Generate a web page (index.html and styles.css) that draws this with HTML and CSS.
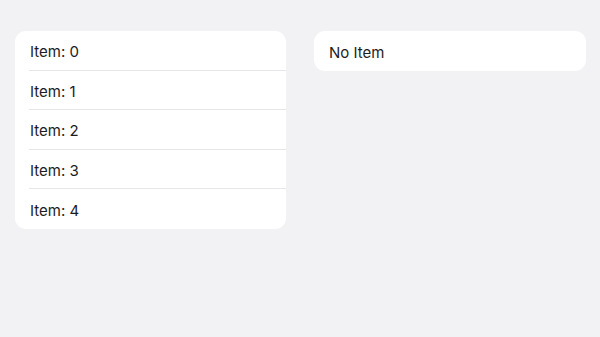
FILE: index.html
```html
<!DOCTYPE html>
<html>
<head>
<meta charset="utf-8">
<link rel="stylesheet" href="styles.css">
</head>
<body>
<div class="layout">
  <div class="card">
    <div class="row"><span>Item: 0</span></div>
    <div class="row"><span>Item: 1</span></div>
    <div class="row"><span>Item: 2</span></div>
    <div class="row"><span>Item: 3</span></div>
    <div class="row"><span>Item: 4</span></div>
  </div>
  <div class="card">
    <div class="row"><span>No Item</span></div>
  </div>
</div>
</body>
</html>
```
FILE: styles.css
```css
html, body {
  margin: 0;
  padding: 0;
  background: #f2f2f4;
  width: 600px;
  height: 337px;
  overflow: hidden;
}
body {
  font-family: Inter, "Liberation Sans", sans-serif;
  font-size: 15px;
  color: #1c1c1e;
}
.layout {
  display: grid;
  grid-template-columns: 271px 272px;
  gap: 28px;
  padding: 31px 14px 0 15px;
  align-items: start;
}
.card {
  background: #ffffff;
  border-radius: 11px;
  overflow: hidden;
}
.row {
  height: 39.6px;
  padding-left: 14px;
}
.row span {
  display: flex;
  align-items: center;
  height: 39.6px;
  padding-left: 1px;
  padding-top: 3px;
  border-bottom: 1px solid #e5e5ea;
  box-sizing: border-box;
}
.row:last-child span {
  border-bottom: none;
}
```
